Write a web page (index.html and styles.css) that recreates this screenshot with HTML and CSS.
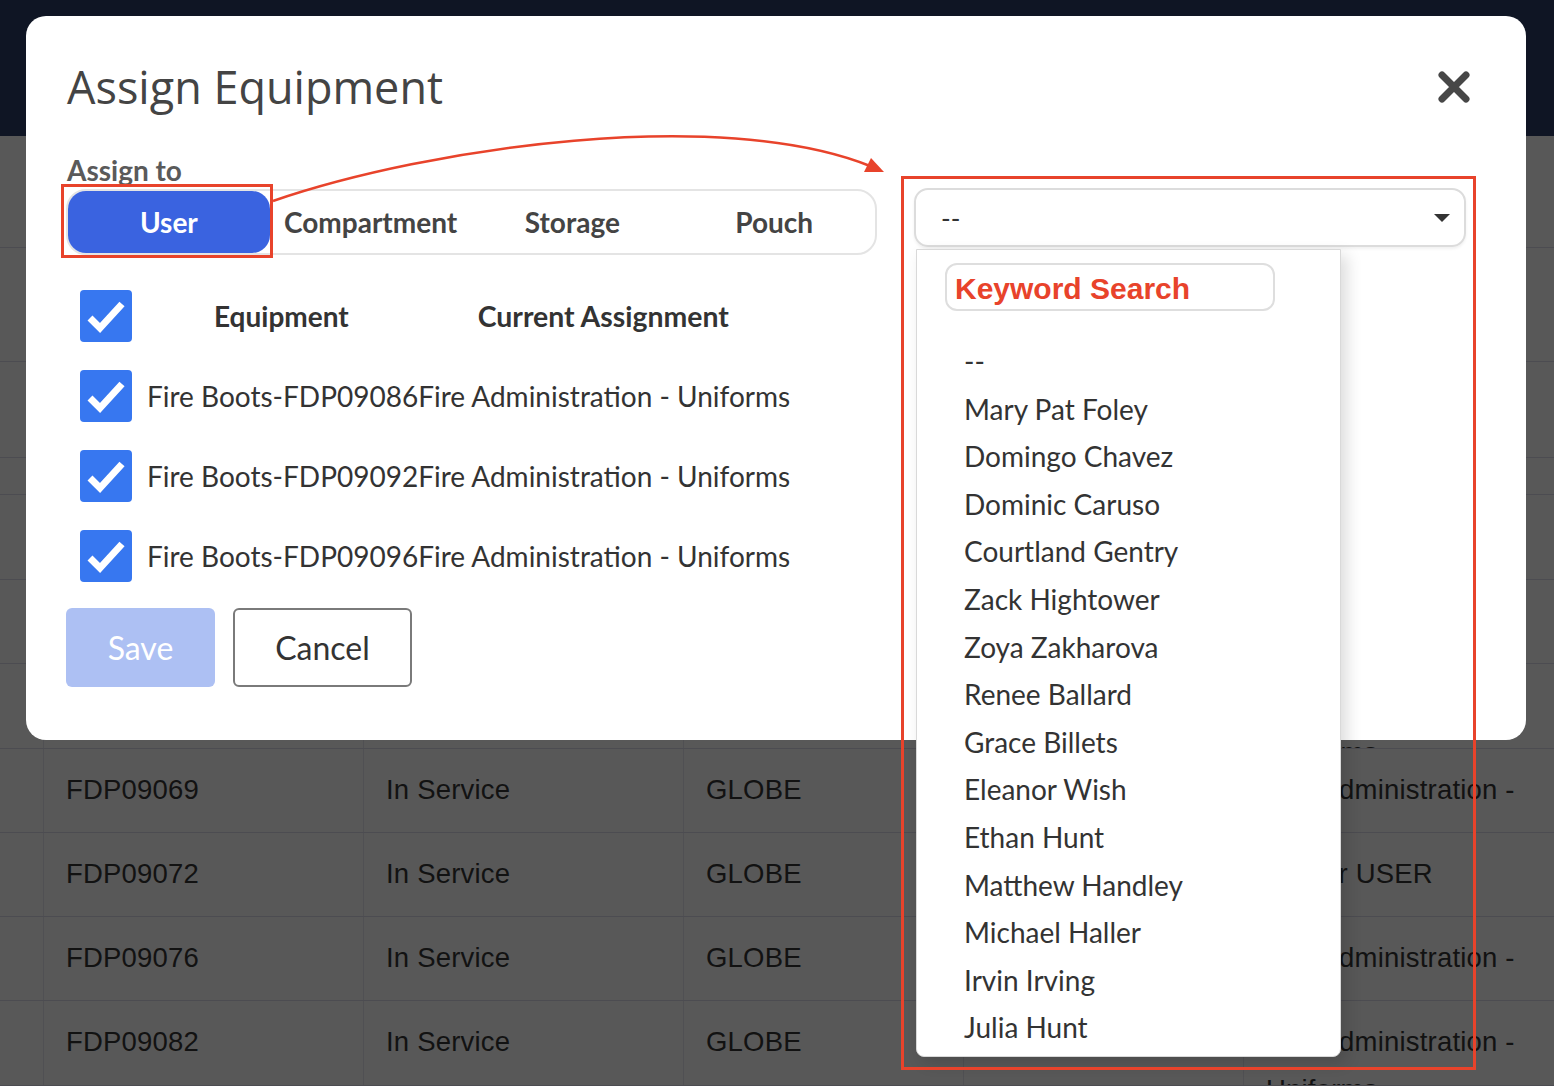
FILE: index.html
```html
<!DOCTYPE html>
<html lang="en">
<head>
    <meta charset="UTF-8">
    <meta name="viewport" content="width=device-width, initial-scale=1.0">
    <title>Assign Equipment</title>
    <link rel="stylesheet" href="styles.css">
</head>
<body>
    <div class="topbar"></div>

    <!-- equipment table behind the dialog -->
    <div class="bg-table">
        <div class="bg-row r112"><div></div><div></div><div></div><div></div><div></div><div></div></div>
        <div class="bg-row r114"><div></div><div></div><div></div><div></div><div></div><div></div></div>
        <div class="bg-row r96"><div></div><div></div><div></div><div></div><div></div><div></div></div>
        <div class="bg-row r37"><div></div><div></div><div></div><div></div><div></div><div></div></div>
        <div class="bg-row r85"><div></div><div></div><div></div><div></div><div></div><div></div></div>
        <div class="bg-row r84"><div></div><div></div><div></div><div></div><div></div><div></div></div>
        <div class="bg-row r85"><div></div><div>FDP09066</div><div>In Service</div><div>GLOBE</div><div></div><div>Fire Administration - Uniforms</div></div>
        <div class="bg-row r84"><div></div><div>FDP09069</div><div>In Service</div><div>GLOBE</div><div></div><div>Fire Administration - Uniforms</div></div>
        <div class="bg-row r84"><div></div><div>FDP09072</div><div>In Service</div><div>GLOBE</div><div></div><div>Officer USER</div></div>
        <div class="bg-row r84"><div></div><div>FDP09076</div><div>In Service</div><div>GLOBE</div><div></div><div>Fire Administration - Uniforms</div></div>
        <div class="bg-row r85"><div></div><div>FDP09082</div><div>In Service</div><div>GLOBE</div><div></div><div>Fire Administration - Uniforms</div></div>
    </div>

    <div class="modal">
        <div class="modal-head">
            <h2>Assign Equipment</h2>
            <button class="close" aria-label="Close">
                <svg width="32" height="32" viewBox="0 0 32 32"><path d="M4 4 L28 28 M28 4 L4 28" stroke="#474747" stroke-width="7" stroke-linecap="round"/></svg>
            </button>
        </div>

        <div class="modal-body">
            <div class="left">
                <label class="assign-label">Assign to</label>
                <div class="seg">
                    <button class="seg-btn active">User</button>
                    <button class="seg-btn">Compartment</button>
                    <button class="seg-btn">Storage</button>
                    <button class="seg-btn">Pouch</button>
                </div>

                <div class="eq-list">
                    <div class="eq-row eq-head">
                        <span class="cb"><svg width="52" height="52" viewBox="0 0 52 52"><path d="M10 28 L20 38 L42 14" fill="none" stroke="#fff" stroke-width="7"/></svg></span>
                        <span class="col-eq">Equipment</span>
                        <span class="col-cur">Current Assignment</span>
                    </div>
                    <div class="eq-row">
                        <span class="cb"><svg width="52" height="52" viewBox="0 0 52 52"><path d="M10 28 L20 38 L42 14" fill="none" stroke="#fff" stroke-width="7"/></svg></span>
                        <span>Fire Boots-FDP09086Fire Administration - Uniforms</span>
                    </div>
                    <div class="eq-row">
                        <span class="cb"><svg width="52" height="52" viewBox="0 0 52 52"><path d="M10 28 L20 38 L42 14" fill="none" stroke="#fff" stroke-width="7"/></svg></span>
                        <span>Fire Boots-FDP09092Fire Administration - Uniforms</span>
                    </div>
                    <div class="eq-row">
                        <span class="cb"><svg width="52" height="52" viewBox="0 0 52 52"><path d="M10 28 L20 38 L42 14" fill="none" stroke="#fff" stroke-width="7"/></svg></span>
                        <span>Fire Boots-FDP09096Fire Administration - Uniforms</span>
                    </div>
                </div>

                <div class="actions">
                    <button class="btn save">Save</button>
                    <button class="btn cancel">Cancel</button>
                </div>
            </div>

            <div class="right">
                <div class="select">
                    <span class="select-value">--</span>
                    <span class="caret"></span>
                    <div class="dropdown">
                        <div class="search">Keyword Search</div>
                        <ul class="options">
                            <li>--</li>
                            <li>Mary Pat Foley</li>
                            <li>Domingo Chavez</li>
                            <li>Dominic Caruso</li>
                            <li>Courtland Gentry</li>
                            <li>Zack Hightower</li>
                            <li>Zoya Zakharova</li>
                            <li>Renee Ballard</li>
                            <li>Grace Billets</li>
                            <li>Eleanor Wish</li>
                            <li>Ethan Hunt</li>
                            <li>Matthew Handley</li>
                            <li>Michael Haller</li>
                            <li>Irvin Irving</li>
                            <li>Julia Hunt</li>
                        </ul>
                    </div>
                </div>
            </div>
        </div>
    </div>

    <!-- red annotation marks -->
    <svg class="annot" width="1554" height="1086" viewBox="0 0 1554 1086">
        <rect x="62.5" y="185.5" width="209" height="71" fill="none" stroke="#e8432b" stroke-width="3"/>
        <rect x="902.5" y="177.5" width="572" height="891" fill="none" stroke="#e8432b" stroke-width="3"/>
        <path d="M273 201 C430 147 720 106 870 166" fill="none" stroke="#e8432b" stroke-width="2.5"/>
        <polygon points="884,172 871,158 864,172" fill="#e8432b"/>
    </svg>
</body>
</html>
```

FILE: styles.css
```css
body { margin: 0; height: 1086px; overflow: hidden; background-color: #585858; font-family: "Lato", sans-serif; position: relative; }

.topbar { height: 136px; background-color: #0f1524; }

.bg-table { font-family: "Liberation Sans", Arial, sans-serif; font-size: 27.5px; color: #121212; letter-spacing: 0.2px; }
.bg-row {
    display: grid;
    grid-template-columns: 43px 320px 320px 280px 280px 1fr;
    grid-template-rows: minmax(0, 1fr);
    border-bottom: 1px solid #4c4c51;
    box-sizing: border-box;
    background-color: #585858;
}
.bg-row > div {
    border-left: 1px solid #505053;
    padding: 17px 22px 0;
    line-height: 48px;
    overflow: hidden;
    min-height: 0;
}
.bg-row > div:first-child { border-left: none; }
.r112 { height: 112px; }
.r114 { height: 114px; }
.r96 { height: 96px; }
.r37 { height: 37px; }
.r85 { height: 85px; }
.r84 { height: 84px; }

.modal {
    position: absolute; left: 26px; top: 16px;
    width: 1500px; height: 724px;
    box-sizing: border-box;
    padding: 44px 60px 0 40px;
    background-color: #fff;
    border-radius: 20px;
}
.modal-head { display: flex; justify-content: space-between; align-items: center; }
.modal-head h2 {
    margin: 0; padding-left: 1px;
    font-family: "Open Sans", sans-serif; font-weight: 400; font-size: 45px; line-height: 54px;
    color: #444;
}
.close { border: none; background: none; padding: 0; margin-right: -4px; width: 32px; height: 32px; display: flex; }

.modal-body { display: flex; gap: 37px; margin-top: 39px; }
.left { width: 811px; }
.right { width: 552px; padding-top: 35px; }

.assign-label { display: block; font-weight: 700; font-size: 28px; line-height: 34px; color: #5a5a5a; padding-left: 1px; }

.seg {
    margin-top: 2px;
    height: 66px; box-sizing: border-box;
    border: 2px solid #e4e4e4; border-radius: 20px;
    display: grid; grid-template-columns: repeat(4, 1fr);
}
.seg-btn {
    border: none; background: none; border-radius: 18px;
    font-family: "Lato", sans-serif; font-weight: 700; font-size: 28px; color: #444;
    padding: 0;
}
.seg-btn.active { background-color: #3a63e0; color: #fff; }

.eq-list { margin-top: 21px; }
.eq-row { height: 80px; display: flex; align-items: center; padding-left: 14px; font-size: 28px; color: #333; }
.cb { width: 52px; height: 52px; background-color: #3777f0; border-radius: 4px; display: flex; margin-right: 15px; flex-shrink: 0; }
.eq-head { font-weight: 700; }
.eq-head .col-eq { margin-left: 67px; }
.eq-head .col-cur { margin-left: 129px; font-size: 28.4px; }

.actions { margin-top: 12px; display: flex; gap: 18px; }
.btn { height: 79px; border-radius: 6px; font-family: "Lato", sans-serif; font-size: 32px; padding: 0; }
.btn.save { width: 149px; border: none; background-color: #adc0f3; color: #fff; }
.btn.cancel { width: 179px; border: 2px solid #7a7a7a; background-color: #fff; color: #333; }

.select {
    position: relative;
    height: 59px; box-sizing: border-box;
    border: 2px solid #dcdcdc; border-radius: 14px;
    display: flex; align-items: center; justify-content: space-between;
    padding: 0 14px 0 25px;
    box-shadow: 0 2px 3px rgba(0,0,0,0.06);
}
.select-value { font-size: 26px; color: #333; }
.caret { width: 0; height: 0; border-top: 8px solid #333; border-left: 8px solid transparent; border-right: 8px solid transparent; }

.dropdown {
    position: absolute; left: 0; top: 59px;
    width: 425px; height: 808px; box-sizing: border-box;
    background-color: #fff;
    border: 1px solid #d9d9d9; border-radius: 0 0 8px 8px;
    box-shadow: 6px 6px 16px rgba(0,0,0,0.14);
    z-index: 5;
}
.search {
    margin: 13px 0 0 28px;
    width: 330px; height: 48px; box-sizing: border-box;
    border: 2px solid #dedede; border-radius: 12px;
    padding: 2px 0 0 8px;
    font-family: "Liberation Sans", Arial, sans-serif; font-weight: 700; font-size: 30px; line-height: 44px;
    color: #e8432b;
}
.options { list-style: none; margin: 27px 0 0; padding: 0 0 0 47px; }
.options li { height: 47.6px; line-height: 47.6px; font-size: 28px; color: #333; white-space: nowrap; }

.annot { position: absolute; left: 0; top: 0; pointer-events: none; z-index: 10; }
```
